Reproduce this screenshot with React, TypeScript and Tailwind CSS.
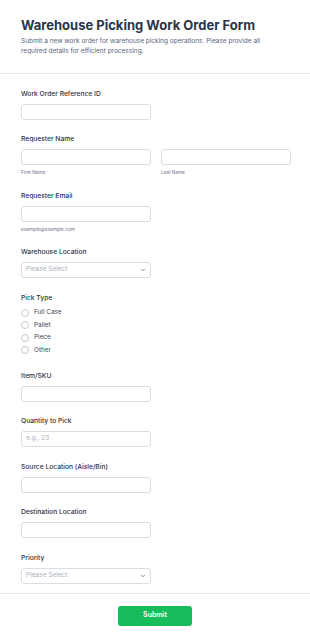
import React from 'react';
import { ChevronDown } from 'lucide-react';

const font = { fontFamily: 'Inter, "Liberation Sans", sans-serif' };

const Label = ({ children }: { children: React.ReactNode }) => (
  <div className="text-[6.7px] leading-[10px] font-medium text-[#2c3345] mb-[5px]">{children}</div>
);

const Input = ({ placeholder, className = 'w-[130px]' }: { placeholder?: string; className?: string }) => (
  <div className={`h-[16px] rounded-[3px] border border-[#dadde6] bg-white flex items-center px-[4px] ${className}`}>
    {placeholder && <span className="text-[6.5px] text-[#a9afbe]">{placeholder}</span>}
  </div>
);

const Select = () => (
  <div className="h-[16px] w-[130px] rounded-[3px] border border-[#dadde6] bg-white flex items-center justify-between pl-[4px] pr-[4px]">
    <span className="text-[6.5px] text-[#a9afbe]">Please Select</span>
    <ChevronDown className="w-[6px] h-[6px] text-[#57647e]" strokeWidth={3} />
  </div>
);

const Sub = ({ children }: { children: React.ReactNode }) => (
  <div className="text-[4.8px] leading-[8px] text-[#6f7690] mt-[3px]">{children}</div>
);

export default function App() {
  const pickTypes = ['Full Case', 'Pallet', 'Piece', 'Other'];

  return (
    <div className="w-[310px] min-h-[642px] bg-white" style={font}>
      <div className="px-[21px] pt-[14px] pb-[17px] border-b border-[#e6e8ee]">
        <h1 className="text-[13px] leading-[22px] font-bold text-[#2c3345]">
          Warehouse Picking Work Order Form
        </h1>
        <p className="text-[6.5px] leading-[10px] text-[#57647e] pr-[20px]">
          Submit a new work order for warehouse picking operations. Please provide all required details for efficient processing.
        </p>
      </div>

      <div className="px-[21px] pt-[15px] pb-[9px] flex flex-col gap-[14.4px] border-b border-[#e6e8ee]">
        <div>
          <Label>Work Order Reference ID</Label>
          <Input />
        </div>

        <div>
          <Label>Requester Name</Label>
          <div className="flex gap-[10px]">
            <div>
              <Input />
              <Sub>First Name</Sub>
            </div>
            <div>
              <Input />
              <Sub>Last Name</Sub>
            </div>
          </div>
        </div>

        <div>
          <Label>Requester Email</Label>
          <Input />
          <Sub>example@example.com</Sub>
        </div>

        <div>
          <Label>Warehouse Location</Label>
          <Select />
        </div>

        <div>
          <div className="text-[6.7px] leading-[10px] font-medium text-[#2c3345] mb-[4px]">Pick Type</div>
          {pickTypes.map((t) => (
            <div key={t} className="h-[12.5px] flex items-center gap-[5px]">
              <span className="w-[8px] h-[8px] rounded-full border border-[#c3c8d3] bg-white" />
              <span className="text-[6.4px] text-[#3d4457]">{t}</span>
            </div>
          ))}
        </div>

        <div>
          <Label>Item/SKU</Label>
          <Input />
        </div>

        <div>
          <Label>Quantity to Pick</Label>
          <Input placeholder="e.g., 23" />
        </div>

        <div>
          <Label>Source Location (Aisle/Bin)</Label>
          <Input />
        </div>

        <div>
          <Label>Destination Location</Label>
          <Input />
        </div>

        <div>
          <Label>Priority</Label>
          <Select />
        </div>
      </div>

      <div className="flex justify-center pt-[12px]">
        <button className="w-[74px] h-[20px] rounded-[3px] bg-[#18bd5b] text-white text-[7px] font-semibold">
          Submit
        </button>
      </div>
    </div>
  );
}
